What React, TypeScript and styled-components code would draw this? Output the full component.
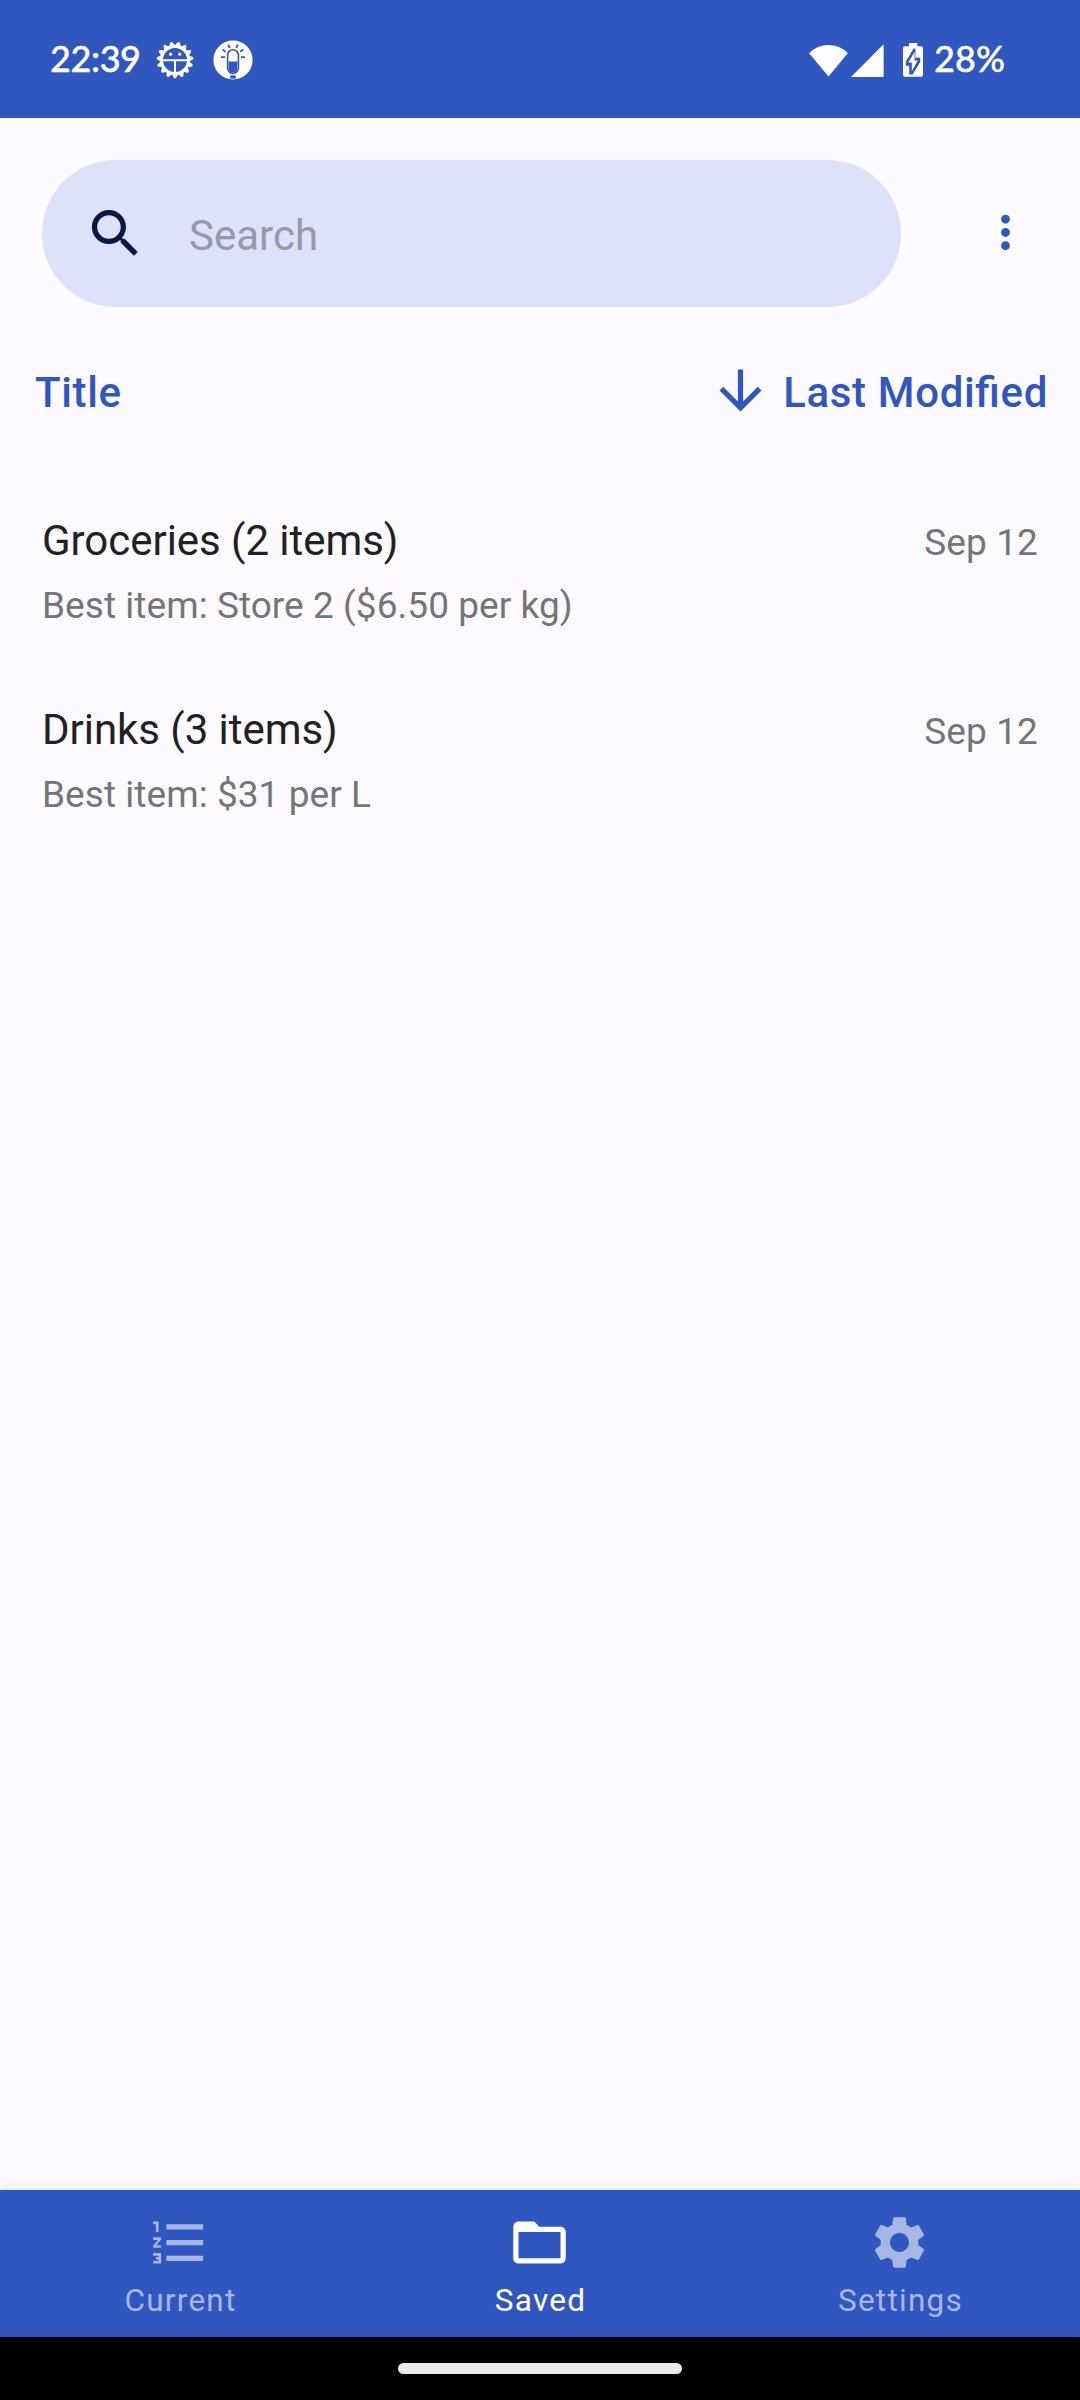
import React from 'react';
import styled, { createGlobalStyle } from 'styled-components';

const color = {
  primary: '#3056c0',
  surface: '#fdfbff',
  field: '#dde1f9',
  fieldIcon: '#0a1744',
  placeholder: '#9799ab',
  text: '#212124',
  muted: '#757577',
  navIdle: '#a7b7e3',
};

const GlobalStyle = createGlobalStyle`
  * { box-sizing: border-box; }
  body {
    margin: 0;
    background: ${color.surface};
    font-family: Roboto, "Liberation Sans", sans-serif;
  }
  svg { display: block; flex: none; }
`;

const Screen = styled.div`
  display: flex;
  flex-direction: column;
  width: 1080px;
  height: 2400px;
  background: ${color.surface};
`;

const StatusBar = styled.header`
  display: flex;
  justify-content: space-between;
  align-items: center;
  height: 118px;
  padding: 2px 74px 0 50px;
  background: ${color.primary};
  color: #fff;
`;

const StatusGroup = styled.div`
  display: flex;
  align-items: center;
`;

const StatusText = styled.span<{ $width: number; $tight?: boolean }>`
  width: ${(p) => p.$width}px;
  height: 44px;
  line-height: 44px;
  margin-top: -4px;
  font-family: Lato, "Open Sans", sans-serif;
  font-size: 36px;
  font-weight: 500;
  letter-spacing: ${(p) => (p.$tight ? '-0.4px' : '0.1px')};
  -webkit-text-stroke: 0.4px #fff;
  white-space: nowrap;
`;

const Notifications = styled.div`
  display: flex;
  gap: 18px;
  margin-left: 13px;
`;

const Connectivity = styled.div`
  display: flex;
  gap: 3px;
  margin-right: 19px;
`;

const BatterySlot = styled.div`
  margin-right: 11px;
`;

const SearchRow = styled.div`
  display: flex;
  align-items: center;
  height: 189px;
  padding: 42px 48px 0 42px;
  justify-content: space-between;
`;

const SearchField = styled.label`
  display: flex;
  align-items: center;
  gap: 42px;
  width: 859px;
  height: 147px;
  padding-left: 42px;
  border-radius: 74px;
  background: ${color.field};
`;

const Placeholder = styled.span`
  padding-top: 4px;
  font-size: 42px;
  line-height: 50px;
  color: ${color.placeholder};
`;

const MenuButton = styled.button`
  display: flex;
  padding: 0;
  border: 0;
  margin-top: -2px;
  background: none;
`;

const SortRow = styled.div`
  display: flex;
  justify-content: space-between;
  align-items: center;
  height: 166px;
  padding: 0 32px 0 35px;
`;

const SortButton = styled.button`
  display: flex;
  align-items: center;
  gap: 11px;
  padding: 0;
  border: 0;
  background: none;
  color: ${color.primary};
  font-family: inherit;
`;

const SortLabel = styled.span`
  padding-top: 5px;
  font-size: 42px;
  font-weight: 500;
  line-height: 50px;
  letter-spacing: 0.65px;
  font-feature-settings: 'liga' 1;
`;

const List = styled.main`
  display: flex;
  flex: 1;
  flex-direction: column;
`;

const Item = styled.article`
  display: flex;
  justify-content: space-between;
  height: 189px;
  padding: 39px 42px 0 42px;
`;

const ItemText = styled.div`
  display: flex;
  flex-direction: column;
`;

const ItemTitle = styled.h2`
  margin: 0;
  font-size: 42px;
  font-weight: 400;
  line-height: 57px;
  letter-spacing: -0.04px;
  color: ${color.text};
`;

const ItemDetail = styled.p`
  margin: 0;
  font-size: 37px;
  line-height: 73px;
  letter-spacing: 0.05px;
  color: ${color.muted};
`;

const ItemDate = styled.time`
  font-size: 37px;
  line-height: 61px;
  letter-spacing: 0.1px;
  color: ${color.muted};
`;

const NavBar = styled.nav`
  display: grid;
  grid-template-columns: repeat(3, 1fr);
  height: 147px;
  background: ${color.primary};
  box-shadow: 0 0 12px rgba(0, 0, 0, 0.12);
`;

const NavItem = styled.a<{ $active?: boolean }>`
  display: flex;
  flex-direction: column;
  align-items: center;
  gap: 8px;
  padding-top: 21px;
  color: ${(p) => (p.$active ? '#fff' : color.navIdle)};
`;

const NavIcon = styled.span`
  display: flex;
  padding-right: 2px;
`;

const NavLabel = styled.span`
  padding-left: 1px;
  font-size: 31.5px;
  line-height: 37px;
  letter-spacing: 1.26px;
`;

const GestureBar = styled.footer`
  display: flex;
  justify-content: center;
  height: 63px;
  padding-top: 26px;
  background: #000;
  z-index: 1;
`;

const GestureHandle = styled.div`
  width: 284px;
  height: 11px;
  border-radius: 5.5px;
  background: #ebebeb;
`;

const Glyph = ({ d, size = 63, fill = 'currentColor' }: { d: string; size?: number; fill?: string }) => (
  <svg width={size} height={size} viewBox="0 0 24 24" fill={fill}>
    <path d={d} />
  </svg>
);

const paths = {
  search:
    'M15.5 14h-.79l-.28-.27C15.41 12.59 16 11.11 16 9.5 16 5.91 13.09 3 9.5 3S3 5.91 3 9.5 5.91 16 9.5 16c1.61 0 3.09-.59 4.23-1.57l.27.28v.79l5 4.99L20.49 19l-4.99-5zm-6 0C7.01 14 5 11.99 5 9.5S7.01 5 9.5 5 14 7.01 14 9.5 11.99 14 9.5 14z',
  more: 'M12 8c1.1 0 2-.9 2-2s-.9-2-2-2-2 .9-2 2 .9 2 2 2zm0 2c-1.1 0-2 .9-2 2s.9 2 2 2 2-.9 2-2-.9-2-2-2zm0 6c-1.1 0-2 .9-2 2s.9 2 2 2 2-.9 2-2-.9-2-2-2z',
  arrowDown: 'M20 12l-1.41-1.41L13 16.17V4h-2v12.17l-5.58-5.59L4 12l8 8 8-8z',
  list: 'M2 17h2v.5H3v1h1v.5H2v1h3v-4H2v1zm1-9h1V4H2v1h1v3zm-1 3h1.8L2 13.1v.9h3v-1H3.2L5 10.9V10H2v1zm5-6v2h14V5H7zm0 14h14v-2H7v2zm0-6h14v-2H7v2z',
  folder:
    'M20 6h-8l-2-2H4c-1.1 0-1.99.9-1.99 2L2 18c0 1.1.9 2 2 2h16c1.1 0 2-.9 2-2V8c0-1.1-.9-2-2-2zm0 12H4V8h16v10z',
  gear: 'M19.14 12.94c.04-.3.06-.61.06-.94 0-.32-.02-.64-.07-.94l2.03-1.58c.18-.14.23-.41.12-.61l-1.92-3.32c-.12-.22-.37-.29-.59-.22l-2.39.96c-.5-.38-1.03-.7-1.62-.94l-.36-2.54c-.04-.24-.24-.41-.48-.41h-3.84c-.24 0-.43.17-.47.41l-.36 2.54c-.59.24-1.13.57-1.62.94l-2.39-.96c-.22-.08-.47 0-.59.22L2.74 8.87c-.12.21-.08.47.12.61l2.03 1.58c-.05.3-.09.63-.09.94s.02.64.07.94l-2.03 1.58c-.18.14-.23.41-.12.61l1.92 3.32c.12.22.37.29.59.22l2.39-.96c.5.38 1.03.7 1.62.94l.36 2.54c.05.24.24.41.48.41h3.84c.24 0 .44-.17.47-.41l.36-2.54c.59-.24 1.13-.56 1.62-.94l2.39.96c.22.08.47 0 .59-.22l1.92-3.32c.12-.22.07-.47-.12-.61l-2.01-1.58zM12 15.6c-1.98 0-3.6-1.62-3.6-3.6s1.62-3.6 3.6-3.6 3.6 1.62 3.6 3.6-1.62 3.6-3.6 3.6z',
};

const teeth = Array.from({ length: 15 }, (_, i) => 180 + i * 24);

const DroidGearIcon = () => (
  <svg width="40" height="40" viewBox="0 0 40 40" fill="none" stroke="#fff">
    <circle cx="20" cy="20" r="13.6" strokeWidth="3.2" />
    {teeth.map((angle) => (
      <path
        key={angle}
        d="M16.8 6.5L18.6 2.4Q20 0.6 21.4 2.4L23.2 6.5Z"
        fill="#fff"
        stroke="none"
        transform={`rotate(${angle} 20 20)`}
      />
    ))}
    <path d="M7 20.3H33M20 20.3V33" strokeWidth="2" />
    <circle cx="15.6" cy="14.2" r="1.6" fill="#fff" stroke="none" />
    <circle cx="24.7" cy="14.2" r="1.6" fill="#fff" stroke="none" />
  </svg>
);

const LampIcon = () => (
  <svg width="40" height="40" viewBox="0 0 40 40" fill="none" stroke={color.primary}>
    <circle cx="20" cy="20" r="19.6" fill="#fff" stroke="none" />
    <rect x="14.6" y="9.8" width="10.8" height="23.6" rx="5.4" strokeWidth="1.6" />
    <path d="M15.6 21.5H24.4V28.2A4.4 4.4 0 0 1 15.6 28.2Z" fill={color.primary} stroke="none" />
    <path d="M17.2 35.4H22.8V38.6H17.2Z" fill={color.primary} stroke="none" />
    <path
      d="M8 17.2H12M28 17.2H32M9.6 9.4L12.8 11.9M30.4 9.4L27.2 11.9M15.2 4.6L16.8 8M24.8 4.6L23.2 8"
      strokeWidth="1.8"
    />
  </svg>
);

const WifiIcon = () => (
  <svg width="39" height="33" viewBox="0 0 39 33" fill="#fff">
    <path d="M19.5 32.5L0.2 9.2A26.6 26.6 0 0 1 38.8 9.2Z" />
  </svg>
);

const SignalIcon = () => (
  <svg width="33" height="33" viewBox="0 0 33 33" fill="#fff">
    <path d="M0 33L32.6 0.2V33Z" />
  </svg>
);

const BatteryIcon = () => (
  <svg width="20" height="34" viewBox="0 0 20 34">
    <path
      d="M6 0H14.3V3.2H18A2 2 0 0 1 20 5.2V31.8A2 2 0 0 1 18 33.8H2A2 2 0 0 1 0 31.8V5.2A2 2 0 0 1 2 3.2H6Z"
      fill="#fff"
    />
    <path d="M12.4 5.4V14.8H17.2V19L9.6 31.4H6.2V22.8H2.8V18.6L10.6 5.4Z" fill={color.primary} />
    <path d="M11.6 9L5.2 19.6H8.8V28.2L14.8 17.4H11.6Z" fill="#fff" />
  </svg>
);

const items = [
  { title: 'Groceries (2 items)', detail: 'Best item: Store 2 ($6.50 per kg)', date: 'Sep 12' },
  { title: 'Drinks (3 items)', detail: 'Best item: $31 per L', date: 'Sep 12' },
];

const tabs = [
  { label: 'Current', icon: paths.list },
  { label: 'Saved', icon: paths.folder, active: true },
  { label: 'Settings', icon: paths.gear },
];

export default function App() {
  return (
    <Screen>
      <GlobalStyle />
      <StatusBar>
        <StatusGroup>
          <StatusText $width={92} $tight>
            22:39
          </StatusText>
          <Notifications>
            <DroidGearIcon />
            <LampIcon />
          </Notifications>
        </StatusGroup>
        <StatusGroup>
          <Connectivity>
            <WifiIcon />
            <SignalIcon />
          </Connectivity>
          <BatterySlot>
            <BatteryIcon />
          </BatterySlot>
          <StatusText $width={72}>28%</StatusText>
        </StatusGroup>
      </StatusBar>

      <SearchRow>
        <SearchField>
          <Glyph d={paths.search} fill={color.fieldIcon} />
          <Placeholder>Search</Placeholder>
        </SearchField>
        <MenuButton>
          <Glyph d={paths.more} size={53} fill={color.primary} />
        </MenuButton>
      </SearchRow>

      <SortRow>
        <SortButton>
          <SortLabel>Title</SortLabel>
        </SortButton>
        <SortButton>
          <Glyph d={paths.arrowDown} />
          <SortLabel>Last Modified</SortLabel>
        </SortButton>
      </SortRow>

      <List>
        {items.map((item) => (
          <Item key={item.title}>
            <ItemText>
              <ItemTitle>{item.title}</ItemTitle>
              <ItemDetail>{item.detail}</ItemDetail>
            </ItemText>
            <ItemDate>{item.date}</ItemDate>
          </Item>
        ))}
      </List>

      <NavBar>
        {tabs.map((tab) => (
          <NavItem key={tab.label} $active={tab.active}>
            <NavIcon>
              <Glyph d={tab.icon} />
            </NavIcon>
            <NavLabel>{tab.label}</NavLabel>
          </NavItem>
        ))}
      </NavBar>
      <GestureBar>
        <GestureHandle />
      </GestureBar>
    </Screen>
  );
}
